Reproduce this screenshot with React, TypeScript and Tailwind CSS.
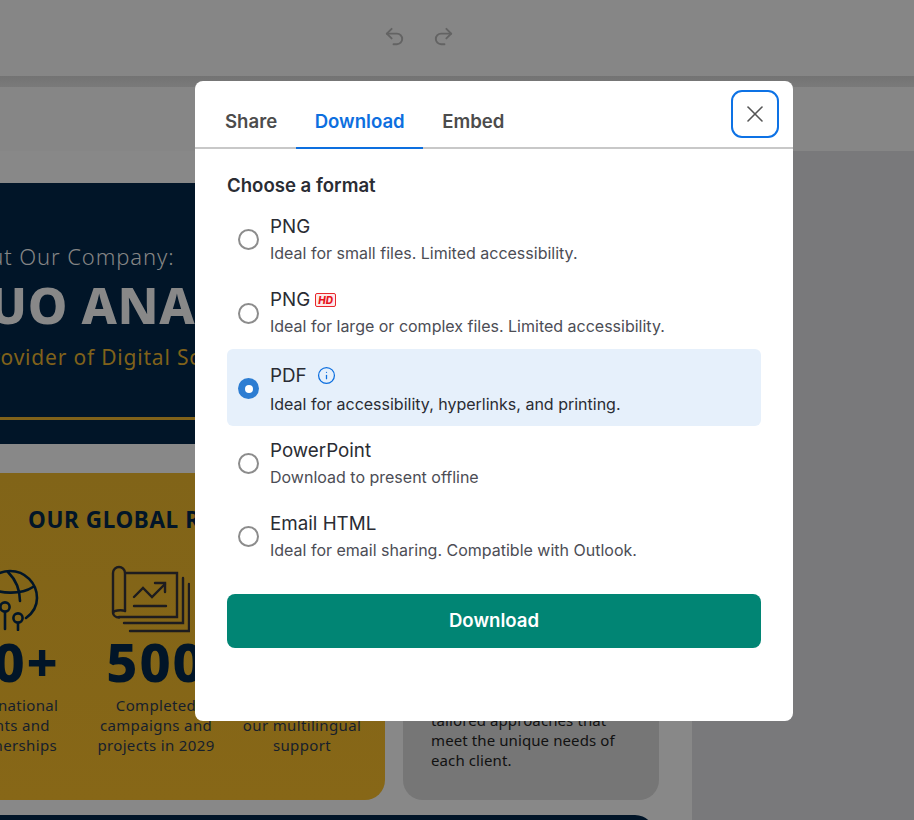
import { Undo2, Redo2, X, Info } from 'lucide-react';

const FORMATS = [
  { name: 'PNG', desc: 'Ideal for small files. Limited accessibility.' },
  { name: 'PNG', desc: 'Ideal for large or complex files. Limited accessibility.', hd: true },
  { name: 'PDF', desc: 'Ideal for accessibility, hyperlinks, and printing.', info: true, selected: true },
  { name: 'PowerPoint', desc: 'Download to present offline' },
  { name: 'Email HTML', desc: 'Ideal for email sharing. Compatible with Outlook.' },
];

const STATS = [
  { value: '50+', lines: ['International', 'clients and', 'partnerships'], icon: 'globe' },
  { value: '500', lines: ['Completed', 'campaigns and', 'projects in 2029'], icon: 'chart' },
  { value: '24/7', lines: ['Assistance through', 'our multilingual', 'support'], icon: 'none' },
];

function GlobeIcon() {
  return (
    <svg width="60" height="66" viewBox="0 0 60 66" fill="none" stroke="#011528" strokeWidth="2.6" strokeLinecap="round" className="-mt-[2px]">
      <path d="M46 53C53 48 57 41 57 33c0-15-12-27-27-27S3 18 3 33" />
      <path d="M7 22c12 7 34 8 46 0" />
      <path d="M28 7c7 7 12 16 12 29" />
      <circle cx="25" cy="42" r="4.6" />
      <path d="M25 47v17" />
      <circle cx="38" cy="53" r="4.6" />
      <path d="M38 58v7" />
    </svg>
  );
}

function ChartIcon() {
  return (
    <svg width="80" height="68" viewBox="0 0 80 68" fill="none" stroke="#1d1c1f" strokeWidth="2.4" strokeLinecap="round" className="-ml-[12px]">
      <path d="M16 8h51v44H9" />
      <path d="M15 46V8c0-3.500-3-6-6-6S3 4.500 3 8v39c0 3 2.500 5.500 6 5.500" />
      <path d="M15 46c-4-1.500-12-.5-12 2" />
      <path d="M73 13v45H14" />
      <path d="M79 19v47H20" />
      <path d="M24 32l9-9 9 9 13-13" />
      <path d="M45 18h10v9" />
      <path d="M24 41h32" />
    </svg>
  );
}

function Radio({ checked, className = '' }: { checked?: boolean; className?: string }) {
  if (checked) {
    return (
      <span className={`flex h-[21px] w-[21px] shrink-0 items-center justify-center rounded-full bg-[#2d7dd2] ${className}`}>
        <span className="h-2 w-2 rounded-full bg-white" />
      </span>
    );
  }
  return <span className={`h-[21px] w-[21px] shrink-0 rounded-full border-2 border-[#8c8c8c] bg-white ${className}`} />;
}

function HdBadge() {
  return (
    <span className="ml-[5px] mt-[2px] flex h-[14px] w-[21px] items-center justify-center rounded-[2px] border border-[#e8262a] bg-[#fdeaea] text-[10px] font-extrabold italic leading-none text-[#e8141c]">
      HD
    </span>
  );
}

export default function App() {
  return (
    <div className="relative h-[820px] w-[914px] overflow-hidden bg-[#79797b] font-['Inter',sans-serif]">
      {/* Top toolbar */}
      <div className="flex h-[76px] items-center gap-[26px] bg-[#868686] pb-[4px] pl-[383px] text-[#636363]">
        <Undo2 size={23} strokeWidth={2} />
        <Redo2 size={23} strokeWidth={2} />
      </div>
      <div className="h-[11px] bg-gradient-to-b from-[#737373] to-[#7a7a7a]" />
      <div className="h-[64px] bg-[#868686]" />

      {/* Document behind the dialog */}
      <div className="h-[669px] w-[692px] overflow-hidden bg-[#888888] pt-[32px] font-['Noto_Sans',sans-serif]">
        <div className="-ml-[80px] w-[739px]">
          <div className="h-[261px] bg-[#011528] px-[35px] pt-[58px]">
            <div className="-ml-[7px] text-[22px] font-light leading-[30px] tracking-[0.9px] text-[#858585]">About Our Company:</div>
            <div className="-ml-[3px] mt-[4px] whitespace-nowrap text-[50px] font-extrabold leading-[60px] tracking-[0.6px] text-[#888888]">DUO ANALYTICS</div>
            <div className="mt-[7px] whitespace-nowrap pl-[23px] text-[21px] leading-[30px] tracking-[0.8px] text-[#80621a]">Provider of Digital Solutions</div>
            <div className="mt-[45px] h-[3px] w-full bg-[#80621a]" />
          </div>

          <div className="mt-[29px] flex gap-[18px]">
            <div className="h-[327px] w-[465px] shrink-0 rounded-br-[20px] rounded-tr-[20px] bg-gradient-to-b from-[#816418] to-[#876717] pt-[33px] text-[#011528]">
              <h2 className="pl-[108px] text-[22.5px] font-bold leading-[28px] tracking-[0.6px]">OUR GLOBAL REACH</h2>
              <div className="mt-[31px] grid grid-cols-[146px_146px_146px] pl-[17px]">
                {STATS.map((s) => (
                  <div key={s.value} className="flex flex-col items-center text-center">
                    <div className="flex h-[68px] items-center">
                      {s.icon === 'globe' && <GlobeIcon />}
                      {s.icon === 'chart' && <ChartIcon />}
                    </div>
                    <div className="-mt-[4px] text-[54px] font-extrabold leading-[64px] tracking-[2px]">{s.value}</div>
                    <p className="mt-[2px] whitespace-nowrap text-[15px] leading-[20px] tracking-[0.35px] text-[#16202c]">
                      {s.lines.map((line) => (
                        <span key={line} className="block">{line}</span>
                      ))}
                    </p>
                  </div>
                ))}
              </div>
            </div>
            <div className="flex h-[327px] w-[256px] shrink-0 items-end rounded-[20px] bg-[#767676] px-[28px] pb-[30px]">
              <p className="whitespace-nowrap text-[15px] leading-[20px] tracking-[0.1px] text-[#111111]">
                <span className="block">We offer customized solutions,</span>
                <span className="block">tailored approaches that</span>
                <span className="block">meet the unique needs of</span>
                <span className="block">each client.</span>
              </p>
            </div>
          </div>

          <div className="mt-[15px] h-[40px] w-[735px] rounded-tr-[20px] bg-[#011528]" />
        </div>
      </div>

      {/* Dialog */}
      <div className="absolute left-[195px] top-[81px] flex h-[640px] w-[598px] flex-col rounded-[8px] bg-white">
        <div className="relative flex h-[68px] items-end border-b-2 border-[#c8c8c8] pl-[11px] text-[18.6px] font-semibold leading-[22px] text-[#4c4c4c]">
          <div className="px-[19px] pb-[15px]">Share</div>
          <div className="-mb-[2px] border-b-2 border-[#0d6fdf] px-[18.5px] pb-[15px] text-[#0d6fdf]">Download</div>
          <div className="px-[19px] pb-[15px]">Embed</div>
          <button className="absolute right-[14px] top-[9px] flex h-[48px] w-[48px] items-center justify-center rounded-[11px] border-[2.5px] border-[#0d72e5] text-[#555555]">
            <X size={28} strokeWidth={1.4} />
          </button>
        </div>

        <div className="flex flex-1 flex-col px-[32px]">
          <h3 className="mt-[25px] text-[18.6px] font-semibold leading-[22px] text-[#2a2c33]">Choose a format</h3>
          <div className="mt-[7px] flex flex-col">
            {FORMATS.map((f, i) => (
              <div
                key={i}
                className={`flex items-center gap-[11px] rounded-[6px] pl-[11px] ${
                  f.selected ? 'h-[77px] bg-[#e6f0fb] pt-[2.5px]' : i > 1 ? 'h-[73px] pt-[2px]' : 'h-[73px]'
                }`}
              >
                <Radio checked={f.selected} className={i === 1 ? 'mt-[2px]' : ''} />
                <div>
                  <div className={`flex h-[25px] items-center text-[18.8px] leading-[25px] text-[#2a2c33] ${f.selected ? '' : '-mt-[2px]'}`}>
                    {f.name}
                    {f.hd && <HdBadge />}
                    {f.info && <Info size={19} strokeWidth={1.6} className="ml-[10px] text-[#0d6fdf]" />}
                  </div>
                  <div className={`text-[16px] leading-[22px] ${f.selected ? 'mt-[5.5px] text-[#2a2c33]' : 'mt-[3px] text-[#4c4d55]'}`}>{f.desc}</div>
                </div>
              </div>
            ))}
          </div>
          <button className="mt-[22px] h-[54px] w-full rounded-[8px] bg-[#018574] text-[18.6px] font-semibold text-white">Download</button>
        </div>
      </div>
    </div>
  );
}
